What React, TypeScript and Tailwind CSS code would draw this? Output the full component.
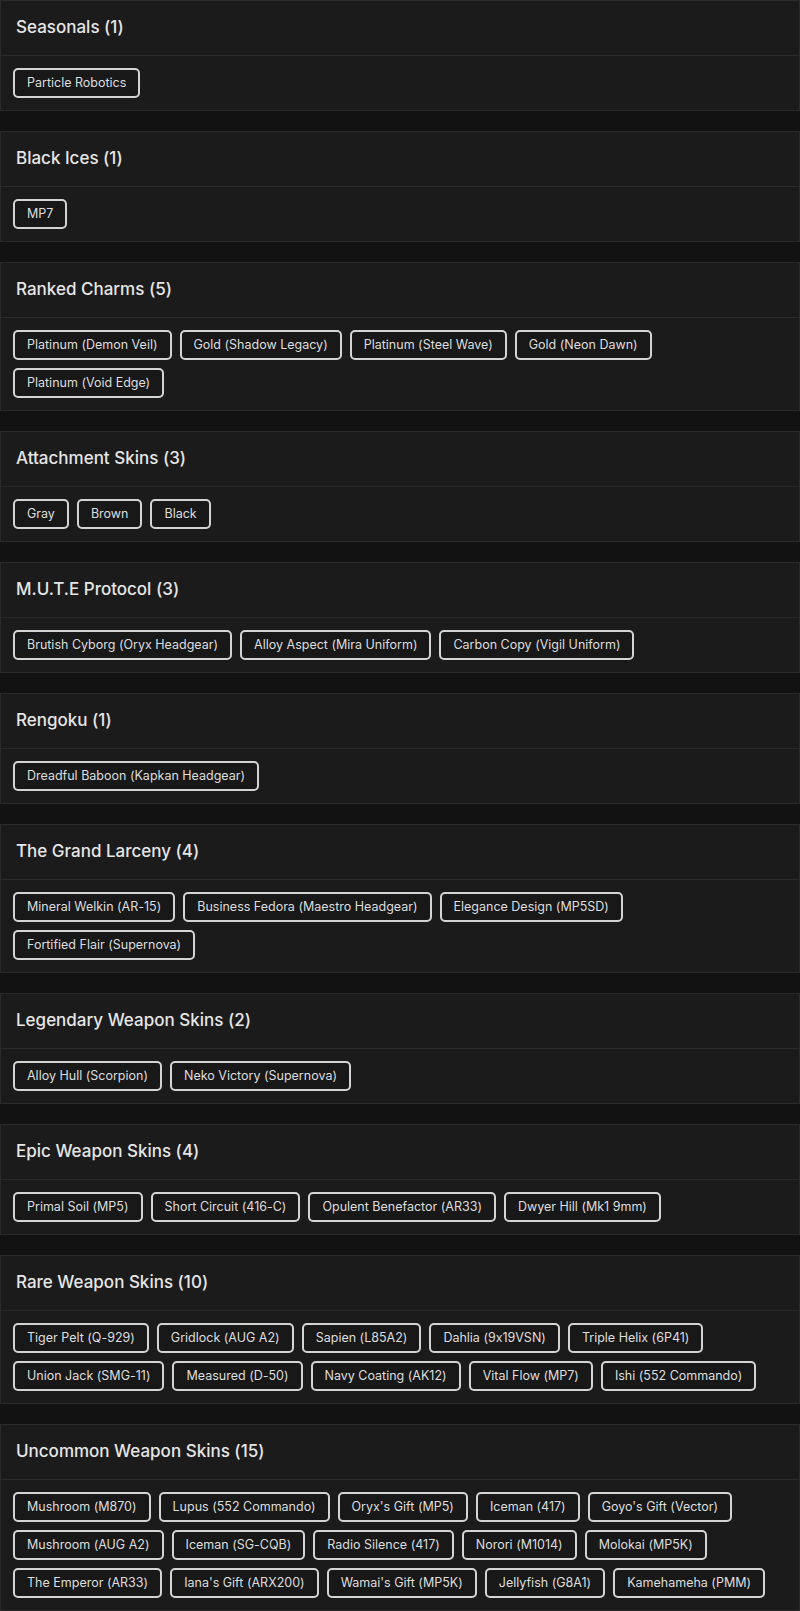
import React from 'react';

const groups: { title: string; items: string[] }[] = [
  { title: 'Seasonals', items: ['Particle Robotics'] },
  { title: 'Black Ices', items: ['MP7'] },
  {
    title: 'Ranked Charms',
    items: ['Platinum (Demon Veil)', 'Gold (Shadow Legacy)', 'Platinum (Steel Wave)', 'Gold (Neon Dawn)', 'Platinum (Void Edge)'],
  },
  { title: 'Attachment Skins', items: ['Gray', 'Brown', 'Black'] },
  {
    title: 'M.U.T.E Protocol',
    items: ['Brutish Cyborg (Oryx Headgear)', 'Alloy Aspect (Mira Uniform)', 'Carbon Copy (Vigil Uniform)'],
  },
  { title: 'Rengoku', items: ['Dreadful Baboon (Kapkan Headgear)'] },
  {
    title: 'The Grand Larceny',
    items: ['Mineral Welkin (AR-15)', 'Business Fedora (Maestro Headgear)', 'Elegance Design (MP5SD)', 'Fortified Flair (Supernova)'],
  },
  { title: 'Legendary Weapon Skins', items: ['Alloy Hull (Scorpion)', 'Neko Victory (Supernova)'] },
  {
    title: 'Epic Weapon Skins',
    items: ['Primal Soil (MP5)', 'Short Circuit (416-C)', 'Opulent Benefactor (AR33)', 'Dwyer Hill (Mk1 9mm)'],
  },
  {
    title: 'Rare Weapon Skins',
    items: [
      'Tiger Pelt (Q-929)',
      'Gridlock (AUG A2)',
      'Sapien (L85A2)',
      'Dahlia (9x19VSN)',
      'Triple Helix (6P41)',
      'Union Jack (SMG-11)',
      'Measured (D-50)',
      'Navy Coating (AK12)',
      'Vital Flow (MP7)',
      'Ishi (552 Commando)',
    ],
  },
  {
    title: 'Uncommon Weapon Skins',
    items: [
      'Mushroom (M870)',
      'Lupus (552 Commando)',
      "Oryx's Gift (MP5)",
      'Iceman (417)',
      "Goyo's Gift (Vector)",
      'Mushroom (AUG A2)',
      'Iceman (SG-CQB)',
      'Radio Silence (417)',
      'Norori (M1014)',
      'Molokai (MP5K)',
      'The Emperor (AR33)',
      "Iana's Gift (ARX200)",
      "Wamai's Gift (MP5K)",
      'Jellyfish (G8A1)',
      'Kamehameha (PMM)',
    ],
  },
];

const Card = ({ title, items }: { title: string; items: string[] }) => (
  <div className="bg-[#1b1b1b] border border-[#2a2a2a]">
    <div className="h-[55px] flex items-center px-[15px] border-b border-[#2a2a2a]">
      <h3 className="text-[17px] font-medium text-[#e6e6e6]">
        {title} ({items.length})
      </h3>
    </div>
    <div className="flex flex-wrap gap-2 p-3">
      {items.map((item) => (
        <span
          key={item}
          className="h-[30px] flex items-center px-3 border-2 border-[#d4d4d4] rounded-[5px] text-[12.5px] text-[#dedede] bg-[#181818]"
        >
          {item}
        </span>
      ))}
    </div>
  </div>
);

export default function App() {
  return (
    <div className="min-h-screen bg-[#121212] flex flex-col gap-5 font-['Inter','Open_Sans',sans-serif] [font-feature-settings:'calt'_0]">
      {groups.map((g) => (
        <Card key={g.title} title={g.title} items={g.items} />
      ))}
    </div>
  );
}
